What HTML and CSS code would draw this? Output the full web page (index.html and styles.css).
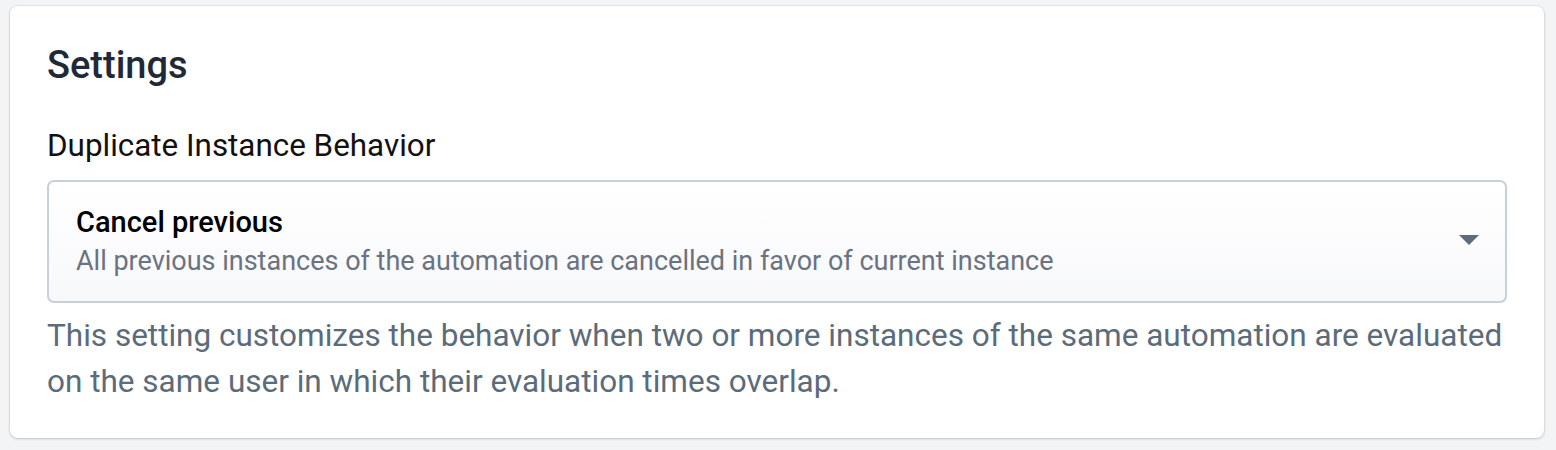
FILE: index.html
```html
<!DOCTYPE html>
<html lang="en">

<head>
    <meta charset="UTF-8">
    <title>Settings</title>
    <link rel="stylesheet" href="styles.css">
</head>

<body>
    <div class="card">
        <h2 class="card-title">Settings</h2>
        <label class="field-label">Duplicate Instance Behavior</label>
        <div class="select">
            <div class="select-text">
                <div class="select-title">Cancel previous</div>
                <div class="select-desc">All previous instances of the automation are cancelled in favor of current instance</div>
            </div>
            <svg class="select-caret" width="20" height="11" viewBox="0 0 20 11">
                <path d="M0 0 L20 0 L10 10 Z" fill="#5f6b7a" />
            </svg>
        </div>
        <p class="help">This setting customizes the behavior when two or more instances of the same automation are evaluated on the same user in which their evaluation times overlap.</p>
    </div>
</body>

</html>
```

FILE: styles.css
```css
body {
    margin: 0;
    padding: 6px 12px 12px 10px;
    background-color: #f3f4f6;
    font-family: Roboto, "Liberation Sans", sans-serif;
}

.card {
    background-color: white;
    border-radius: 8px;
    box-shadow: 0 1px 3px rgba(0, 0, 0, 0.18), 0 0 0 1px rgba(0, 0, 0, 0.04);
    padding: 37px 37px 33px 37px;
}

.card-title {
    margin: 0 0 37px 0;
    font-size: 38px;
    font-weight: 500;
    color: #1f2937;
    line-height: 1.2;
}

.field-label {
    display: block;
    font-size: 31.4px;
    color: #111;
    line-height: 1.3;
    margin-bottom: 14px;
}

.select {
    display: flex;
    align-items: center;
    border: 2px solid #c7cfd9;
    border-radius: 7px;
    background: linear-gradient(#ffffff, #f7f8fa);
    padding: 19.5px 26px 22.5px 27px;
}

.select-text {
    flex: 1;
}

.select-title {
    font-size: 29px;
    font-weight: 500;
    color: #000;
    line-height: 1.4;
}

.select-desc {
    font-size: 27px;
    color: #6b7280;
    line-height: 1.3;
    margin-top: 1px;
}

.help {
    margin: 10px 0 0 0;
    font-size: 31.5px;
    line-height: 46px;
    color: #5c6b7a;
}
```
